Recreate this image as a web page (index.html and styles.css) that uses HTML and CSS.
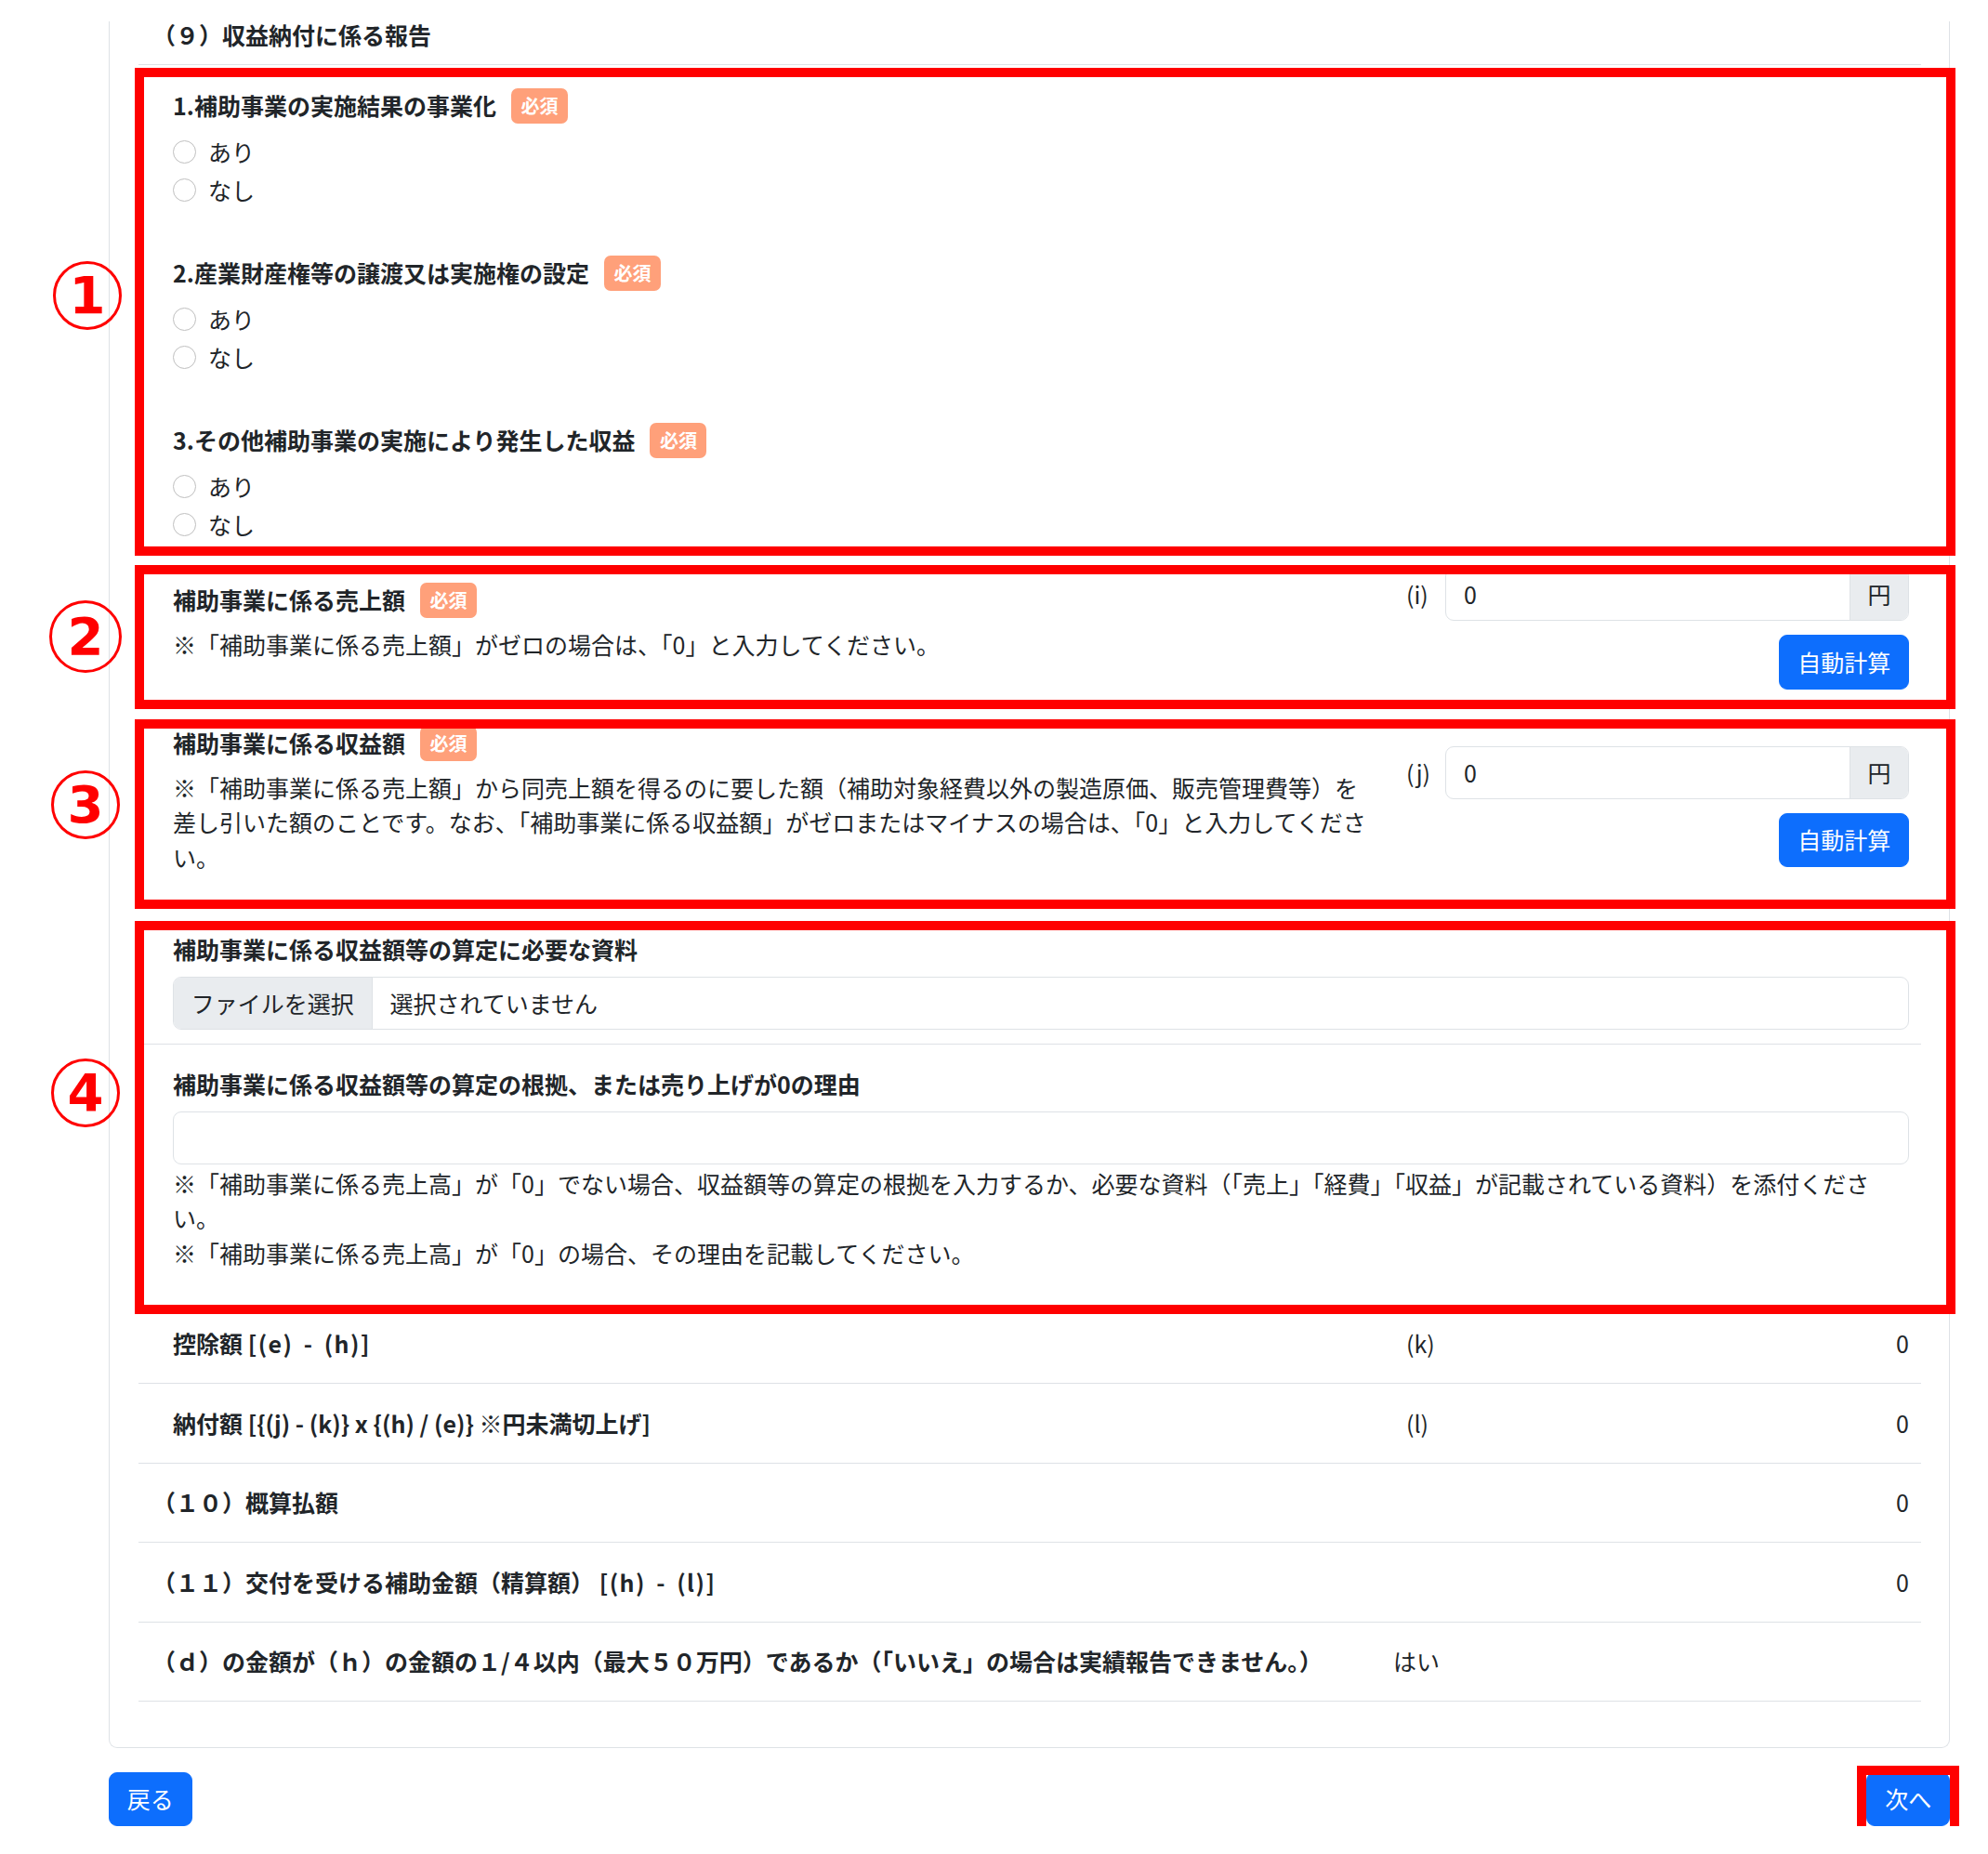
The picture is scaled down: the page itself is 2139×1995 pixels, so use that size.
FILE: index.html
```html
<!DOCTYPE html>
<html lang="ja">
  <head>
    <meta charset="utf-8">
    <title>収益納付に係る報告</title>
    <link rel="stylesheet" href="styles.css">
  </head>
  <body>
    <div class="page">
      <div class="card">
        <div class="card-title">（９）収益納付に係る報告</div>

        <div class="section mark mark-1">
          <span class="num num-1">1</span>
          <div class="choice">
            <div class="field-label">1.補助事業の実施結果の事業化<span class="badge">必須</span></div>
            <div class="radios">
              <label class="radio-row"><input type="radio" class="radio" name="q1">あり</label>
              <label class="radio-row"><input type="radio" class="radio" name="q1">なし</label>
            </div>
          </div>
          <div class="choice">
            <div class="field-label">2.産業財産権等の譲渡又は実施権の設定<span class="badge">必須</span></div>
            <div class="radios">
              <label class="radio-row"><input type="radio" class="radio" name="q2">あり</label>
              <label class="radio-row"><input type="radio" class="radio" name="q2">なし</label>
            </div>
          </div>
          <div class="choice">
            <div class="field-label">3.その他補助事業の実施により発生した収益<span class="badge">必須</span></div>
            <div class="radios">
              <label class="radio-row"><input type="radio" class="radio" name="q3">あり</label>
              <label class="radio-row"><input type="radio" class="radio" name="q3">なし</label>
            </div>
          </div>
        </div>

        <div class="calc-row calc-sales mark mark-2">
          <span class="num num-2">2</span>
          <div class="calc-main">
            <div class="field-label">補助事業に係る売上額<span class="badge">必須</span></div>
            <p class="note">※「補助事業に係る売上額」がゼロの場合は、「0」と入力してください。</p>
          </div>
          <div class="calc-side">
            <div class="calc-key">(i)</div>
            <div class="calc-fields">
              <div class="input-group">
                <div class="input-value">0</div>
                <div class="input-unit">円</div>
              </div>
              <button class="btn">自動計算</button>
            </div>
          </div>
        </div>

        <div class="calc-row calc-profit mark mark-3">
          <span class="num num-3">3</span>
          <div class="calc-main">
            <div class="field-label">補助事業に係る収益額<span class="badge">必須</span></div>
            <p class="note">※「補助事業に係る売上額」から同売上額を得るのに要した額（補助対象経費以外の製造原価、販売管理費等）を差し引いた額のことです。なお、「補助事業に係る収益額」がゼロまたはマイナスの場合は、「0」と入力してください。</p>
          </div>
          <div class="calc-side">
            <div class="calc-key">(j)</div>
            <div class="calc-fields">
              <div class="input-group">
                <div class="input-value">0</div>
                <div class="input-unit">円</div>
              </div>
              <button class="btn">自動計算</button>
            </div>
          </div>
        </div>

        <div class="mark mark-4">
          <span class="num num-4">4</span>
          <div class="file-row">
            <div class="field-title">補助事業に係る収益額等の算定に必要な資料</div>
            <div class="file-control">
              <span class="file-button">ファイルを選択</span>
              <span class="file-name">選択されていません</span>
            </div>
          </div>
          <div class="reason-row">
            <div class="field-title">補助事業に係る収益額等の算定の根拠、または売り上げが0の理由</div>
            <input type="text" class="text-input">
            <p class="hint">※「補助事業に係る売上高」が「0」でない場合、収益額等の算定の根拠を入力するか、必要な資料（「売上」「経費」「収益」が記載されている資料）を添付ください。</p>
            <p class="hint">※「補助事業に係る売上高」が「0」の場合、その理由を記載してください。</p>
          </div>
        </div>

        <div class="sum-row">
          <div class="sum-label sub">控除額 <span class="formula">[(e) - (h)]</span></div>
          <div class="sum-key">(k)</div>
          <div class="sum-value">0</div>
        </div>
        <div class="sum-row">
          <div class="sum-label sub">納付額 [{(j) - (k)} x {(h) / (e)} ※円未満切上げ]</div>
          <div class="sum-key">(l)</div>
          <div class="sum-value">0</div>
        </div>
        <div class="sum-row">
          <div class="sum-label">（１０）概算払額</div>
          <div class="sum-key"></div>
          <div class="sum-value">0</div>
        </div>
        <div class="sum-row">
          <div class="sum-label">（１１）交付を受ける補助金額（精算額） <span class="formula">[(h) - (l)]</span></div>
          <div class="sum-key"></div>
          <div class="sum-value">0</div>
        </div>
        <div class="sum-row answer">
          <div class="sum-label">（ｄ）の金額が（ｈ）の金額の１/４以内（最大５０万円）であるか（「いいえ」の場合は実績報告できません。）</div>
          <div class="sum-value">はい</div>
        </div>
      </div>

      <div class="actions">
        <button class="btn">戻る</button>
        <span class="mark mark-next"><button class="btn">次へ</button></span>
      </div>
    </div>
  </body>
</html>
```

FILE: styles.css
```css
body {
  margin: 0;
  font-family: "Noto Sans CJK JP", "Noto Sans", sans-serif;
  font-size: 25px;
  line-height: 1.5;
  color: #212529;
  background-color: #fff;
}
button {
  font: inherit;
}
p {
  margin: 0;
}

.page {
  width: 1981px;
  padding: 23px 0 0 117px;
}
.card {
  border: 1px solid #dee2e6;
  border-top: 0;
  border-radius: 0 0 9px 9px;
  padding: 0 30px 49px 31px;
}
.card-title {
  padding: 0 13px 17px 15px;
  line-height: 29px;
  font-weight: 700;
  border-bottom: 1px solid #dee2e6;
}

/* red annotation frames drawn over the form */
.mark {
  position: relative;
}
.mark::after {
  content: "";
  position: absolute;
  border: 10px solid #f00;
  pointer-events: none;
  z-index: 2;
}
.mark-1::after { top: 3px; bottom: 2px; left: -4px; right: -37px; }
.mark-2::after { top: 8px; bottom: -1px; left: -4px; right: -37px; }
.mark-3::after { top: 12px; bottom: 1px; left: -4px; right: -37px; }
.mark-4::after { top: 12px; bottom: -10px; left: -4px; right: -37px; }
.mark-next::after { top: -7px; bottom: -10px; left: -10px; right: -10px; }

.num {
  position: absolute;
  left: -94px;
  width: 74px;
  height: 74px;
  box-sizing: border-box;
  border: 3px solid #f00;
  border-radius: 50%;
  color: #f00;
  font-family: "DejaVu Sans", sans-serif;
  font-weight: 700;
  font-size: 56px;
  line-height: 1;
  display: flex;
  align-items: center;
  justify-content: center;
}
.num-1 { top: 211px; left: -92px; }
.num-2 { top: 46px; left: -96px; width: 78px; height: 78px; }
.num-3 { top: 67px; }
.num-4 { top: 160px; }

/* yes / no questions */
.section {
  padding: 25px 13px 15px 37px;
}
.choice + .choice {
  margin-top: 50px;
}
.field-label {
  display: flex;
  align-items: center;
  height: 38px;
  font-weight: 700;
}
.badge {
  margin-left: 16px;
  padding: 0 10.5px;
  height: 38px;
  line-height: 38px;
  border-radius: 7px;
  background-color: #ffa07a;
  color: #fff;
  font-size: 20px;
  font-weight: 700;
}
.radios {
  margin-top: 10px;
}
.radio-row {
  display: flex;
  align-items: center;
  height: 41px;
}
.radio {
  appearance: none;
  width: 25px;
  height: 25px;
  margin: 0 13px 0 0;
  border: 1px solid #bfbfbf;
  border-radius: 50%;
}

/* amount rows with auto-calc */
.calc-row {
  display: flex;
  align-items: center;
  padding-left: 37px;
  padding-right: 13px;
}
.calc-sales {
  padding-top: 11px;
  padding-bottom: 20px;
}
.calc-profit {
  padding-top: 19px;
  padding-bottom: 23.5px;
}
.calc-main {
  flex: 1;
  padding-bottom: 14px;
}
.note {
  margin-top: 10px;
  max-width: 1294px;
}
.calc-side {
  display: flex;
  width: 554px;
}
.calc-key {
  width: 55px;
  padding: 10px 0 0 13px;
  box-sizing: border-box;
}
.calc-fields {
  flex: 1;
  display: flex;
  flex-direction: column;
  align-items: flex-end;
  gap: 15px;
}
.input-group {
  align-self: stretch;
  display: flex;
  height: 57px;
  box-sizing: border-box;
  border: 1px solid #dee2e6;
  border-radius: 9px;
  overflow: hidden;
  line-height: 55px;
}
.input-value {
  flex: 1;
  padding: 0 19px;
}
.input-unit {
  width: 62px;
  text-align: center;
  background-color: #e9ecef;
  border-left: 1px solid #dee2e6;
}
.btn {
  display: block;
  background-color: #0d6efd;
  color: #fff;
  border: 1px solid #0d6efd;
  border-radius: 9px;
  padding: 9.5px 18.75px;
  line-height: 37.5px;
  cursor: pointer;
}

/* attachment and reason */
.file-row {
  padding: 24px 13px 15px 37px;
  border-bottom: 1px solid #dee2e6;
}
.field-title {
  font-weight: 700;
}
.file-control {
  margin-top: 10.5px;
  display: flex;
  height: 57px;
  box-sizing: border-box;
  border: 1px solid #dee2e6;
  border-radius: 9px;
  overflow: hidden;
  line-height: 55px;
}
.file-button {
  padding: 0 18.75px;
  background-color: #e9ecef;
  border-right: 1px solid #dee2e6;
}
.file-name {
  padding-left: 19px;
}
.reason-row {
  padding: 24px 13px 36.5px 37px;
}
.text-input {
  display: block;
  margin-top: 10.5px;
  width: 100%;
  height: 57px;
  box-sizing: border-box;
  border: 1px solid #dee2e6;
  border-radius: 9px;
  font: inherit;
}
.hint:first-of-type {
  margin-top: 2px;
}

/* totals */
.sum-row {
  display: grid;
  grid-template-columns: 1fr 55px 499px;
  padding: 23.5px 13px 23.5px 15px;
  border-bottom: 1px solid #dee2e6;
}
.sum-row.answer {
  grid-template-columns: 1fr 555px;
}
.sum-label {
  font-weight: 700;
}
.sum-label.sub {
  padding-left: 22px;
}
.formula {
  letter-spacing: 1.5px;
  word-spacing: 4px;
}
.sum-key {
  padding-left: 13px;
}
.sum-value {
  text-align: right;
}
.answer .sum-value {
  text-align: left;
}

.actions {
  display: flex;
  justify-content: space-between;
  align-items: flex-start;
  margin-top: 25.5px;
}
```
